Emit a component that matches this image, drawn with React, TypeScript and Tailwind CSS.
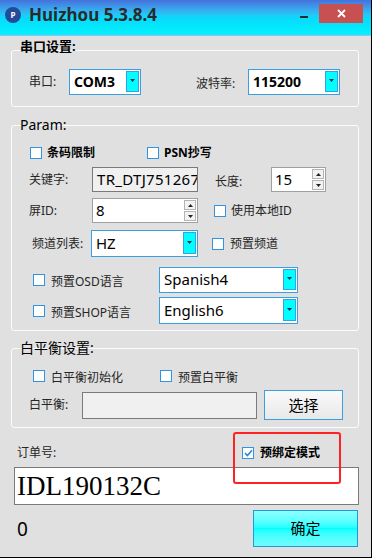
import React from 'react';

const font = "font-['Noto_Sans','Noto_Sans_CJK_SC',sans-serif]";

const Check: React.FC<{ checked?: boolean }> = ({ checked }) => (
  <span className="w-[12px] h-[12px] shrink-0 border border-[#3393df] bg-white flex items-center justify-center">
    {checked && (
      <svg width="9" height="8" viewBox="0 0 9 8">
        <path d="M1 4.2 L3.4 6.5 L8 1.2" fill="none" stroke="#2a86d6" strokeWidth="1.6" />
      </svg>
    )}
  </span>
);

const Combo: React.FC<{ value: string; w: string; h: string; bold?: boolean }> = ({ value, w, h, bold }) => (
  <div className={`${w} ${h} border border-[#3a9fe0] bg-white flex pt-[1px] pb-[2px] pr-[1px]`}>
    <span
      className={`flex-1 pl-[4px] flex items-center text-black ${bold ? 'font-bold text-[14px]' : 'text-[15px]'}`}
    >
      {value}
    </span>
    <span className="w-[13px] border border-[#3a9fe0] bg-[#00ffff] flex items-center justify-center pb-[2px]">
      <svg width="5" height="3" viewBox="0 0 5 3">
        <path d="M0 0 H5 L2.5 3 Z" fill="#16324d" />
      </svg>
    </span>
  </div>
);

const Spin: React.FC<{ value: string; w: string }> = ({ value, w }) => (
  <div className={`${w} h-[25px] border border-[#a0a0a0] bg-white flex p-[1px]`}>
    <span className="flex-1 pl-[2px] flex items-center text-[15px] text-black">{value}</span>
    <div className="w-[12px] flex flex-col gap-[1px]">
      <span className="flex-1 border border-[#b4b4b4] bg-[#f2f2f2] flex items-center justify-center">
        <svg width="5" height="3" viewBox="0 0 5 3">
          <path d="M0 3 H5 L2.5 0 Z" fill="#222" />
        </svg>
      </span>
      <span className="flex-1 border border-[#b4b4b4] bg-[#f2f2f2] flex items-center justify-center">
        <svg width="5" height="3" viewBox="0 0 5 3">
          <path d="M0 0 H5 L2.5 3 Z" fill="#222" />
        </svg>
      </span>
    </div>
  </div>
);

const Label: React.FC<{ children: React.ReactNode; w?: string }> = ({ children, w = '' }) => (
  <span className={`${w} shrink-0 text-[12px] text-[#262626] leading-none`}>{children}</span>
);

const Legend: React.FC<{ children: React.ReactNode }> = ({ children }) => (
  <div className="-mt-[10px] ml-[8px] w-fit h-[18px] leading-[18px] text-black text-[14px]">{children}</div>
);

export default function App() {
  return (
    <div className={`w-[375px] h-[559px] bg-white ${font}`}>
      <div className="relative w-[372px] h-[558px] border-r border-b border-black bg-[#e0e0e0] flex flex-col">
        {/* title bar */}
        <div className="h-[36px] shrink-0 bg-linear-to-b from-[#4570dc] via-[#0ad8fb] to-[#00f4ff] border-b border-[#a9b6f2] flex items-start">
          <div className="h-[30px] flex items-center pl-[5px]">
            <span className="w-[16px] h-[16px] rounded-full bg-[#234b97] text-white text-[8px] font-bold flex items-center justify-center">
              P
            </span>
            <span className="ml-[8px] text-[17px] font-bold text-[#2a2a2a]">Huizhou 5.3.8.4</span>
          </div>
          <span className="ml-auto mt-[16px] w-[8px] h-[2px] bg-[#2a2a2a]" />
          <span className="ml-[11px] mr-[8px] mt-[4px] w-[44px] h-[19px] bg-[#c75050] flex items-center justify-center">
            <svg width="9" height="9" viewBox="0 0 9 9">
              <path d="M1 1 L8 8 M8 1 L1 8" stroke="#fff" strokeWidth="1.8" />
            </svg>
          </span>
        </div>

        <div className="pl-[11px] flex flex-col">
          {/* 串口设置 */}
          <div className="mt-[14px] w-[348px] h-[57px] border border-[#fbfbfb] rounded-[3px] flex flex-col">
            <div className="-mt-[14px] ml-[8px] w-fit h-[18px] leading-[18px] font-bold text-[13px] text-black">
              串口设置:
            </div>
            <div className="mt-[14px] flex items-center pl-[17px]">
              <Label w="w-[40px]">串口:</Label>
              <Combo value="COM3" w="w-[72px]" h="h-[26px]" bold />
              <span className="ml-[55px]">
                <Label w="w-[52px] inline-block">波特率:</Label>
              </span>
              <Combo value="115200" w="w-[92px]" h="h-[26px]" bold />
            </div>
          </div>

          {/* Param */}
          <div className="mt-[18px] w-[348px] h-[206px] border border-[#fbfbfb] rounded-[3px] flex flex-col">
            <Legend>Param:</Legend>
            <div className="mt-[11px] h-[16px] flex items-center pl-[18px] text-[12px] font-bold text-black">
              <span className="w-[117px] flex items-center gap-[5px]">
                <Check />
                条码限制
              </span>
              <span className="flex items-center gap-[5px]">
                <Check />
                PSN抄写
              </span>
            </div>
            <div className="mt-[6px] h-[25px] flex items-center pl-[17px]">
              <Label w="w-[63px]">关键字:</Label>
              <div className="w-[106px] h-[25px] border border-[#7a7a7a] bg-[#f0f0f0] overflow-hidden whitespace-nowrap pl-[4px] flex items-center text-[15px] tracking-[0.3px] text-black">
                TR_DTJ751267
              </div>
              <span className="ml-[17px]">
                <Label w="w-[56px] inline-block">长度:</Label>
              </span>
              <Spin value="15" w="w-[55px]" />
            </div>
            <div className="mt-[6px] h-[25px] flex items-center pl-[17px]">
              <Label w="w-[63px]">屏ID:</Label>
              <Spin value="8" w="w-[106px]" />
              <span className="ml-[16px] flex items-center gap-[5px]">
                <Check />
                <Label>使用本地ID</Label>
              </span>
            </div>
            <div className="mt-[7px] h-[27px] flex items-center pl-[20px]">
              <Label w="w-[59px]">频道列表:</Label>
              <Combo value="HZ" w="w-[107px]" h="h-[27px]" />
              <span className="ml-[14px] flex items-center gap-[6px]">
                <Check />
                <Label>预置频道</Label>
              </span>
            </div>
            <div className="mt-[10px] h-[26px] flex items-center pl-[21px]">
              <Check />
              <span className="ml-[6px]">
                <Label w="w-[108px] inline-block">预置OSD语言</Label>
              </span>
              <Combo value="Spanish4" w="w-[139px]" h="h-[26px]" />
            </div>
            <div className="mt-[4px] h-[27px] flex items-center pl-[21px]">
              <Check />
              <span className="ml-[6px]">
                <Label w="w-[108px] inline-block">预置SHOP语言</Label>
              </span>
              <Combo value="English6" w="w-[139px]" h="h-[27px]" />
            </div>
          </div>

          {/* 白平衡设置 */}
          <div className="mt-[17px] w-[348px] h-[80px] border border-[#fbfbfb] rounded-[3px] flex flex-col">
            <Legend>白平衡设置:</Legend>
            <div className="mt-[11px] h-[16px] flex items-center pl-[21px]">
              <Check />
              <span className="ml-[6px]">
                <Label w="w-[109px] inline-block">白平衡初始化</Label>
              </span>
              <Check />
              <span className="ml-[6px]">
                <Label>预置白平衡</Label>
              </span>
            </div>
            <div className="mt-[6px] h-[30px] flex items-center pl-[17px]">
              <Label w="w-[53px]">白平衡:</Label>
              <div className="w-[175px] h-[27px] border border-[#7a7a7a] bg-[#f0f0f0]" />
              <button className="ml-[7px] w-[79px] h-[30px] border border-[#3a9fe0] bg-linear-to-b from-[#fafafa] to-[#e8e8e8] text-[15px] text-black flex items-center justify-center">
                选择
              </button>
            </div>
          </div>

          {/* bottom */}
          <div className="mt-[17px] h-[16px] flex items-center pl-[6px]">
            <Label w="w-[225px]">订单号:</Label>
            <span className="flex items-center gap-[6px]">
              <Check checked />
              <span className="text-[12px] font-bold text-black leading-none">预绑定模式</span>
            </span>
          </div>
          <div className="mt-[6px] ml-[3px] w-[345px] h-[38px] border border-[#7a7a7a] bg-white flex items-center pl-[2px] font-['Liberation_Serif',serif] text-[27px] text-black">
            IDL190132C
          </div>
          <div className="mt-[5px] h-[37px] flex items-center">
            <span className="ml-[6px] mt-[2px] text-[19px] text-black">0</span>
            <button className="ml-auto mr-[13px] w-[105px] h-[37px] border border-[#1e9bd7] bg-linear-to-b from-[#8cffff] via-[#00ffff] to-[#6ffcfc] text-[15px] text-black flex items-center justify-center">
              确定
            </button>
          </div>
        </div>

        {/* red annotation frame */}
        <div className="absolute left-[233px] top-[432px] w-[108px] h-[52px] border-2 border-[#ff2222] rounded-[3px]" />
      </div>
    </div>
  );
}
